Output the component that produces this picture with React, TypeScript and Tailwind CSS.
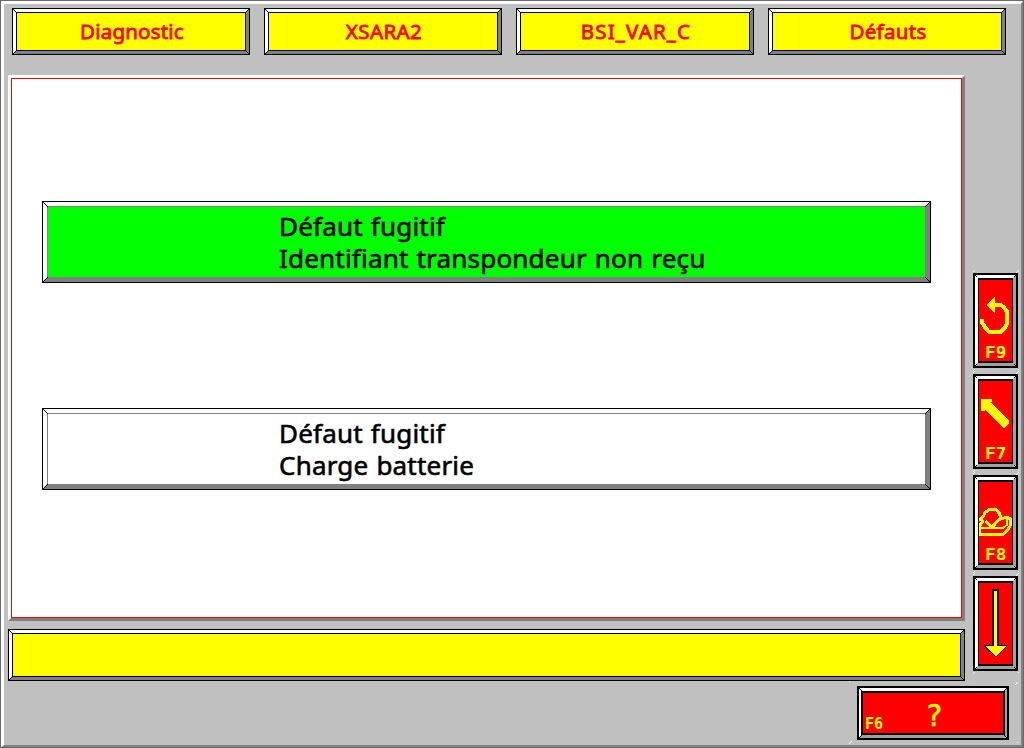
import type { ReactNode } from "react";

function Corners({ size }: { size: number }) {
  const line = (x1: number, y1: number, x2: number, y2: number) => (
    <svg className="block" width={size} height={size} viewBox={`0 0 ${size} ${size}`} shapeRendering="crispEdges">
      {Array.from({ length: size }, (_, i) => (
        <rect key={i} x={x1 < x2 ? i : size - 1 - i} y={y1 < y2 ? i : size - 1 - i} width="1" height="1" />
      ))}
    </svg>
  );
  return (
    <>
      <div className="absolute left-0 top-0">{line(0, 0, 1, 1)}</div>
      <div className="absolute right-0 top-0">{line(1, 0, 0, 1)}</div>
      <div className="absolute bottom-0 left-0">{line(0, 1, 1, 0)}</div>
      <div className="absolute bottom-0 right-0">{line(0, 0, 1, 1)}</div>
    </>
  );
}

function YellowPanel({ className, children }: { className: string; children?: ReactNode }) {
  return (
    <div className={`relative shrink-0 border border-black ${className}`}>
      <div className="h-full border-[3px] border-t-white border-l-white border-r-[#808080] border-b-[#808080]">
        <div className="flex h-full items-center justify-center border border-black bg-[#ffff00] pb-[2px] pl-[2px] font-['Noto_Sans',sans-serif] text-[20.5px] leading-6 text-[#ff0000] [-webkit-text-stroke:0.8px_#ff0000]">
          {children}
        </div>
      </div>
      <Corners size={4} />
    </div>
  );
}

function Fault({ color, lines }: { color: string; lines: string[] }) {
  return (
    <div className="relative h-[82px] w-[889px] border border-black">
      <div className="h-full border-t-4 border-r-[5px] border-b-[5px] border-l-4 border-t-white border-r-[#808080] border-b-[#808080] border-l-white">
        <div className={`h-full border-t border-l border-[#808080] pt-[3px] pl-[231px] font-['Noto_Sans',sans-serif] text-[26px] leading-8 tracking-[0.2px] whitespace-nowrap text-black [word-spacing:1px] [-webkit-text-stroke:0.6px_black] ${color}`}>
          {lines.map((l) => (
            <div key={l}>{l}</div>
          ))}
        </div>
      </div>
      <Corners size={5} />
    </div>
  );
}

function SideButton({ label, children }: { label?: string; children: ReactNode }) {
  return (
    <div className="relative h-[95px] w-[45px] border-2 border-black">
      <div className="h-full border-[3px] border-t-white border-l-white border-r-[#a0a0a0] border-b-[#a0a0a0]">
        <div className="relative h-full border-x border-y-2 border-black bg-[#ff0000]">
          <svg className="block h-[81px] w-[33px]" viewBox="0 0 99 243" shapeRendering="crispEdges">
            {children}
          </svg>
          {label && (
            <span className="absolute bottom-0 left-[6px] origin-left scale-x-[1.18] font-['DejaVu_Sans_Mono',monospace] text-[15px] leading-[15px] font-bold text-[#ffff00]">
              {label}
            </span>
          )}
        </div>
      </div>
      <Corners size={2} />
      <svg className="absolute -top-[5px] -left-[2px] h-[101px] w-[46px]" viewBox="0 0 46 101" shapeRendering="crispEdges" fill="#fff">
        <path d="M0 1h1v1h-1zM1 0h1v1h-1zM43 2h1v1h-1zM44 1h1v1h-1zM45 0h1v1h-1zM0 100h1v1h-1zM1 99h1v1h-1zM45 99h1v1h-1z" />
      </svg>
    </div>
  );
}

const tabs = [
  { text: "Diagnostic", spacing: "tracking-[0.2px]" },
  { text: "XSARA2", spacing: "tracking-[0.4px]" },
  { text: "BSI_VAR_C", spacing: "tracking-[1.15px]" },
  { text: "Défauts", spacing: "tracking-[0.3px]" },
];

export default function App() {
  return (
    <div className="h-[748px] w-[1024px] overflow-hidden border border-[#696769] bg-[#c0c0c0]">
      <div className="h-full border-t-[3px] border-r-2 border-b-2 border-l-[3px] border-t-white border-r-[#808080] border-b-[#808080] border-l-white">
        <header className="flex gap-[14px] pt-1 pl-2">
          {tabs.map((t) => (
            <YellowPanel key={t.text} className="h-[47px] w-[238px]">
              <span className={t.spacing}>{t.text}</span>
            </YellowPanel>
          ))}
        </header>
        <div className="mt-5 flex pl-1">
          <main className="w-[957px]">
            <section className="h-[546px] border-[3px] border-t-white border-r-[#808080] border-b-[#808080] border-l-white">
              <div className="flex h-full flex-col gap-[125px] border border-[#ff0000] bg-white pt-[122px] pl-[30px]">
                <Fault color="bg-[#00ff00]" lines={["Défaut fugitif", "Identifiant transpondeur non reçu"]} />
                <Fault color="bg-white" lines={["Défaut fugitif", "Charge batterie"]} />
              </div>
            </section>
            <YellowPanel className="mt-2 h-[52px] w-full" />
          </main>
          <nav className="flex flex-col gap-[6px] pt-[198px] pl-2">
            <SideButton label="F9">
              <path d="M21 75L48 51V99Z" fill="#ff0" />
              <path d="M10 117V129L20 145L31 157H63L76 145L83 133V94L75 83L66 75H42" fill="none" stroke="#ff0" strokeWidth="12" />
            </SideButton>
            <SideButton label="F7">
              <path d="M6 54H39V60L36 66L90 120V126L75 141H72L21 87L12 90H6Z" fill="#ff0" />
            </SideButton>
            <SideButton label="F8">
              <g fill="none" stroke="#ff0" strokeWidth="9">
                <path d="M0 114L14 102L18 92L30 83H51L61 94L66 108" />
                <path d="M14 114L0 134M20 117L42 138M62 111L42 132" />
                <path d="M62 112L84 105L95 112V129L86 144L74 156H0" />
                <path d="M0 139H72L84 128V108" strokeWidth="6" />
                <path d="M2 135V160" strokeWidth="5" />
              </g>
            </SideButton>
            <SideButton>
              <path d="M39 18H60V186H84V192L51 222L15 192V186H39Z" fill="#000" />
              <path d="M45 24H54V189H81V192L51 219L21 192V189H45Z" fill="#ff0" />
            </SideButton>
          </nav>
        </div>
        <footer className="mt-[5px] pl-[853px]">
          <div className="relative h-[54px] w-[152px] border-2 border-black">
            <div className="h-full border-x-2 border-y-[3px] border-t-white border-r-[#a0a0a0] border-b-[#a0a0a0] border-l-white">
              <div className="relative flex h-full border-2 border-black bg-[#ff0000] font-['DejaVu_Sans_Mono',monospace] text-[#ffff00]">
                <span className="w-[20px] self-end pb-[1px] pl-[2px] text-[15px] leading-[15px] font-bold">F6</span>
                <span className="pt-[5px] pl-[42px] text-[30px] leading-[36px] [-webkit-text-stroke:0.5px_#ffff00]">?</span>
              </div>
            </div>
            <Corners size={3} />
            <svg className="absolute -top-[8px] -left-[11px] h-[64px] w-[172px]" viewBox="0 0 172 64" shapeRendering="crispEdges" fill="#fff">
              <path d="M167 4h1v1h-1zM168 3h1v1h-1zM169 2h1v1h-1zM1 63h1v1h-1zM2 62h1v1h-1zM3 61h1v1h-1zM169 62h1v1h-1zM1 1h1v1h-1z" />
            </svg>
          </div>
        </footer>
      </div>
    </div>
  );
}
